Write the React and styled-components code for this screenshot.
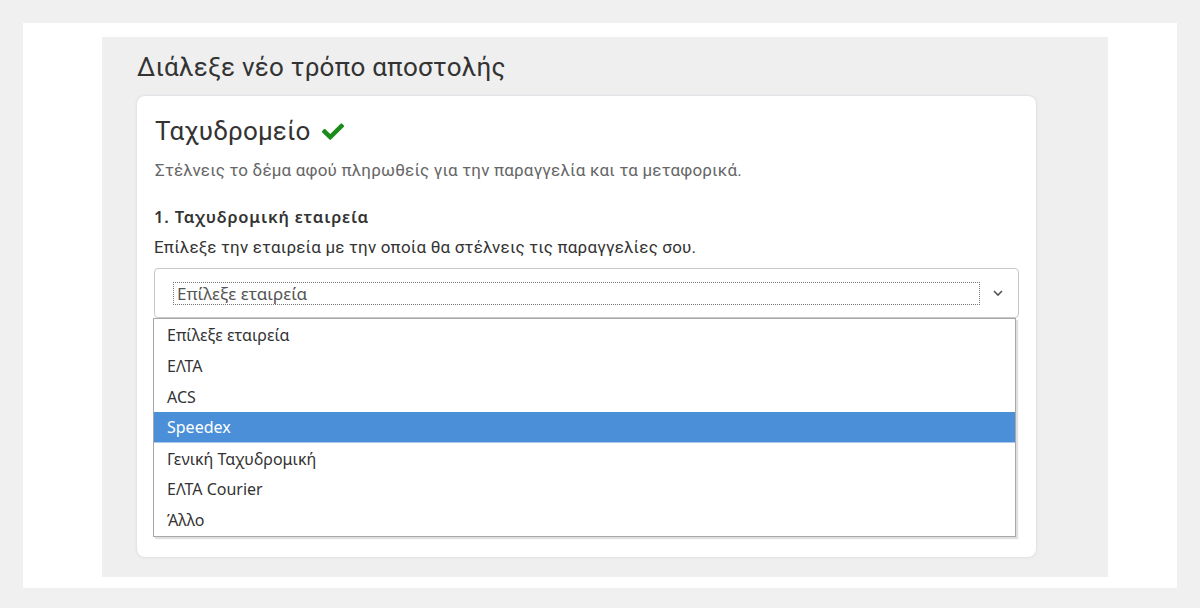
import React from "react";
import styled, { createGlobalStyle } from "styled-components";

const Global = createGlobalStyle`
  html, body { margin: 0; padding: 0; background: #f0f0f0; }
  body { font-family: Roboto, "Noto Sans", sans-serif; color: #333; }
  * { box-sizing: border-box; }
`;

const Page = styled.div`
  width: 1200px;
  height: 608px;
  padding: 23px;
  background: #f0f0f0;
`;

const Frame = styled.div`
  height: 565px;
  background: #fff;
  padding: 14px 69px 0 79px;
`;

const Panel = styled.div`
  height: 540px;
  background: #efefef;
  padding: 14px 72px 0 35px;
`;

const Title = styled.h1`
  margin: 0;
  font-family: Roboto, sans-serif;
  font-weight: 400;
  font-size: 26px;
  letter-spacing: 0.25px;
  line-height: 32px;
  color: #333;
`;

const Card = styled.div`
  margin-top: 13px;
  background: #fff;
  border-radius: 8px;
  box-shadow: 0 0 3px rgba(0, 40, 100, 0.15);
  padding: 19px 17px 0 17px;
  height: 461px;
`;

const CardHead = styled.div`
  display: flex;
  align-items: center;
  gap: 11px;
  font-size: 26px;
  letter-spacing: 0.15px;
  line-height: 32px;
  color: #333;
  padding-left: 1px;
`;

const Desc = styled.p`
  margin: 12px 0 0 1px;
  font-size: 17px;
  letter-spacing: 0.18px;
  line-height: 22px;
  color: #666;
`;

const StepLabel = styled.h3`
  margin: 25px 0 0 0;
  font-family: "Noto Sans", sans-serif;
  font-size: 16.5px;
  font-weight: 600;
  letter-spacing: 0.8px;
  line-height: 22px;
  color: #333;
`;

const StepHint = styled.p`
  margin: 8px 0 0 0;
  font-size: 17px;
  letter-spacing: 0.18px;
  line-height: 22px;
  color: #333;
`;

const SelectWrap = styled.div`
  position: relative;
  margin-top: 10px;
`;

const SelectBox = styled.div`
  height: 50px;
  border: 1px solid #c8c8c8;
  border-radius: 4px;
  display: flex;
  align-items: center;
  padding: 0 14px 0 18px;
  gap: 12px;
  background: #fff;
`;

const SelectValue = styled.div`
  flex: 1;
  height: 23px;
  border: 1px dotted #777;
  display: flex;
  align-items: center;
  padding-left: 3px;
  font-family: "Noto Sans", sans-serif;
  font-size: 17px;
  color: #555;
`;

const Menu = styled.ul`
  position: absolute;
  left: -1px;
  top: 50px;
  width: 863px;
  margin: 0;
  padding: 1px 0 0;
  list-style: none;
  background: #fff;
  border: 1px solid #a8a8a8;
  box-shadow: 2px 2px 1px rgba(0, 0, 0, 0.12);
  z-index: 2;
`;

const Option = styled.li`
  height: 30.8px;
  display: flex;
  align-items: center;
  padding-left: 13px;
  font-family: "Noto Sans", sans-serif;
  font-size: 16px;
  color: ${(p) => (p.$active ? "#fff" : "#333")};
  background: ${(p) => (p.$active ? "#4a8fd8" : "transparent")};
  border-bottom: ${(p) => (p.$active ? "1px solid #a9c8ee" : "none")};
`;

const Check = () => (
  <svg width="22" height="18" viewBox="0 0 512 416" aria-hidden="true">
    <path
      fill="#1b8c1b"
      d="M173.9 407.4L7.5 241c-10-10-10-26.2 0-36.2l36.2-36.2c10-10 26.2-10 36.2 0L192 280.7 432.1 40.6c10-10 26.2-10 36.2 0l36.2 36.2c10 10 10 26.2 0 36.2L210.1 407.4c-10 10-26.2 10-36.2 0z"
    />
  </svg>
);

const Chevron = () => (
  <svg width="12" height="8" viewBox="0 0 12 8" aria-hidden="true">
    <path d="M2 2l4 4 4-4" fill="none" stroke="#555" strokeWidth="1.6" />
  </svg>
);

const options = [
  "Επίλεξε εταιρεία",
  "ΕΛΤΑ",
  "ACS",
  "Speedex",
  "Γενική Ταχυδρομική",
  "ΕΛΤΑ Courier",
  "Άλλο",
];

export default function App() {
  return (
    <>
      <Global />
      <Page>
        <Frame>
          <Panel>
            <Title>Διάλεξε νέο τρόπο αποστολής</Title>
            <Card>
              <CardHead>
                <span>Ταχυδρομείο</span>
                <Check />
              </CardHead>
              <Desc>
                Στέλνεις το δέμα αφού πληρωθείς για την παραγγελία και τα
                μεταφορικά.
              </Desc>
              <StepLabel>1. Ταχυδρομική εταιρεία</StepLabel>
              <StepHint>
                Επίλεξε την εταιρεία με την οποία θα στέλνεις τις παραγγελίες
                σου.
              </StepHint>
              <SelectWrap>
                <SelectBox>
                  <SelectValue>Επίλεξε εταιρεία</SelectValue>
                  <Chevron />
                </SelectBox>
                <Menu>
                  {options.map((o) => (
                    <Option key={o} $active={o === "Speedex"}>
                      {o}
                    </Option>
                  ))}
                </Menu>
              </SelectWrap>
            </Card>
          </Panel>
        </Frame>
      </Page>
    </>
  );
}
